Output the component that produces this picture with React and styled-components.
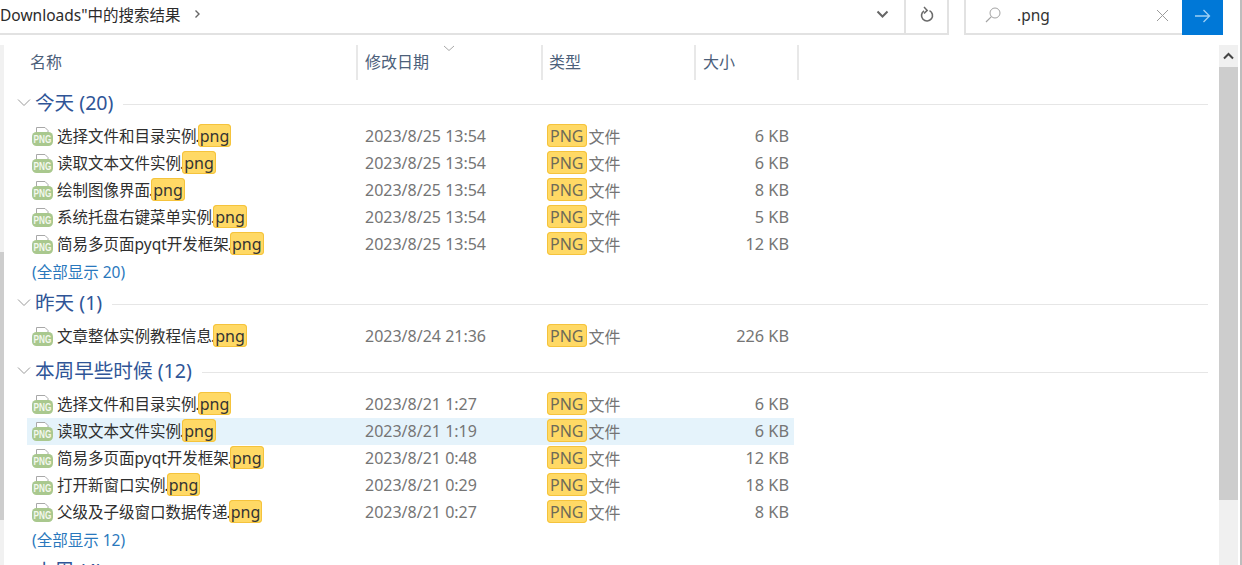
import React from "react";
import styled, { createGlobalStyle } from "styled-components";

const Global = createGlobalStyle`
  html, body { margin: 0; padding: 0; height: 565px; overflow: hidden; background: #fff; }
  body { font-family: "Noto Sans", "Noto Sans CJK SC", sans-serif; }
  * { box-sizing: border-box; }
`;

const Page = styled.div`
  width: 1242px; height: 565px; overflow: hidden; display: flex; flex-direction: column;
  border-right: 2px solid #bdbdbd; background: #fff;
`;
const TopBar = styled.div`display: flex; height: 35px; flex: none;`;
const AddressBox = styled.div`
  width: 949px; display: flex; align-items: center;
  border-bottom: 2px solid #e2e2e2; border-right: 2px solid #e2e2e2;
`;
const Crumb = styled.div`
  flex: 1; display: flex; align-items: center; gap: 10px; font-size: 15.5px; color: #2b2b2b; padding-bottom: 5px;
`;
const CrumbArrow = styled.svg`margin-left: 3px;`;
const BarButton = styled.div`
  width: ${p => p.$w}px; height: 100%; display: flex; align-items: center; justify-content: center; padding: 0 0 4px 0;
  border-right: ${p => (p.$divider ? "2px solid #e2e2e2" : "none")};
`;
const SearchBox = styled.div`
  margin-left: 15px; width: 218px; display: flex; align-items: center; padding: 0 13px 3px 19px;
  border-left: 2px solid #e2e2e2; border-bottom: 2px solid #e2e2e2;
`;
const SearchText = styled.span`flex: 1; margin-left: 16px; font-size: 15.5px; color: #333;`;
const GoButton = styled.div`
  width: 41px; height: 35px; padding-bottom: 4px; background: #0078d7; display: flex; align-items: center; justify-content: center;
`;
const Body = styled.div`flex: 1; display: flex; margin-top: 10px; min-height: 0; padding-right: 2px;`;
const LeftRail = styled.div`
  width: 4px; flex: none; display: flex; flex-direction: column; background: #f1f1f1;
`;
const LeftThumb = styled.div`height: 268px; margin-top: 207px; background: #cdcdcd;`;
const Content = styled.div`flex: 1; min-width: 0; overflow: hidden; padding-right: 11px;`;
const ScrollBar = styled.div`
  width: 19px; flex: none; background: #f0f0f0; display: flex; flex-direction: column;
`;
const ScrollArrow = styled.div`height: 22px; flex: none; display: flex; align-items: center; justify-content: center;`;
const ScrollThumb = styled.div`height: 433px; background: #cdcdcd;`;

const HeaderRow = styled.div`display: flex; height: 35px; padding-left: 22px;`;
const HeaderCell = styled.div`
  position: relative; width: ${p => p.$w}px; display: flex; align-items: center;
  padding: 0 0 3px ${p => p.$pad}px; font-size: 16px; color: #4c607a;
  border-right: 2px solid #e8e8e8;
`;
const SortMark = styled.svg`position: absolute; left: 85px; top: 0;`;

const Section = styled.section`padding-bottom: ${p => (p.$tail ? "6.5px" : "0")};`;
const GroupHeader = styled.div`
  height: 30px; display: flex; align-items: center; margin-top: ${p => p.$top ?? 3}px; padding-left: 13px;
  font-size: 19.6px; color: #2f5597;
`;
const GroupLabel = styled.span`margin: 0 0 3px 4px; white-space: nowrap;`;
const GroupLine = styled.div`flex: 1; height: 1px; background: #e6e6e6; margin: 2px 0 0 10px;`;
const GroupChevron = styled.svg`flex: none; margin-bottom: 1px;`;
const RowList = styled.div`padding-top: 4.5px;`;
const Row = styled.div`
  display: grid; grid-template-columns: 338px 182px 153px 89px; align-items: center;
  height: 27px; width: 767px; margin-left: 23px; font-size: 15.5px; padding-bottom: 1px;
  background: ${p => (p.$selected ? "#e5f3fb" : "transparent")};
`;
const NameCell = styled.div`display: flex; align-items: center; color: #2f2f2f; white-space: nowrap; padding-left: 4px;`;
const FileIcon = styled.svg`flex: none; margin-right: 4px; margin-top: 1px;`;
const Dot = styled.span`margin: 0 -2px 0 -1px;`;
const Mark = styled.span`
  display: inline-flex; align-items: center; height: 23px; padding: 0 ${p => (p.$muted ? 3 : 2)}px; border-radius: 4px;
  font-size: 16px; background: #ffd965; box-shadow: inset 0 0 0 1px #f5c33c;
  color: ${p => (p.$muted ? "#6d6a58" : "#333")};
`;
const MetaCell = styled.div`color: #757575; white-space: nowrap; font-size: 16px;`;
const TypeCell = styled.div`display: flex; align-items: center; gap: 2px; color: #757575; font-size: 16px;`;
const SizeCell = styled.div`color: #757575; text-align: right; white-space: nowrap; font-size: 16.3px;`;
const MoreLink = styled.div`
  height: 27px; margin: 0.5px 0 3px 28px; display: flex; align-items: center; font-size: 15.5px; color: #2a78bd;
`;

const PngIcon = () => (
  <FileIcon width="22" height="21" viewBox="0 0 22 21">
    <path d="M5.5 8V1.5h8.5l3 3V8" fill="#fff" stroke="#a8a8a8" strokeWidth="1" />
    <rect x="1" y="6" width="21" height="14" rx="4.5" fill="#a9c88e" />
    <text transform="translate(11.5 17) scale(1 1.3)" textAnchor="middle" fontSize="8.2"
      fontWeight="700" fill="#f4f8ee" fontFamily="Liberation Sans, sans-serif">PNG</text>
  </FileIcon>
);

const Chevron = () => (
  <GroupChevron width="14" height="9" viewBox="0 0 14 9"><path d="M1 1.5l6 6 6-6" fill="none" stroke="#9a9a9a" strokeWidth="1" /></GroupChevron>
);

const FileRow = ({ name, date, size, selected }) => (
  <Row $selected={selected}>
    <NameCell><PngIcon />{name}<Dot>.</Dot><Mark>png</Mark></NameCell>
    <MetaCell>{date}</MetaCell>
    <TypeCell><Mark $muted>PNG</Mark>文件</TypeCell>
    <SizeCell>{size}</SizeCell>
  </Row>
);

const groups = [
  { label: "今天 (20)", top: 8, more: "(全部显示 20)", rows: [
    ["选择文件和目录实例", "2023/8/25 13:54", "6 KB"],
    ["读取文本文件实例", "2023/8/25 13:54", "6 KB"],
    ["绘制图像界面", "2023/8/25 13:54", "8 KB"],
    ["系统托盘右键菜单实例", "2023/8/25 13:54", "5 KB"],
    ["简易多页面pyqt开发框架", "2023/8/25 13:54", "12 KB"],
  ]},
  { label: "昨天 (1)", rows: [["文章整体实例教程信息", "2023/8/24 21:36", "226 KB"]] },
  { label: "本周早些时候 (12)", top: 0, more: "(全部显示 12)", rows: [
    ["选择文件和目录实例", "2023/8/21 1:27", "6 KB"],
    ["读取文本文件实例", "2023/8/21 1:19", "6 KB", true],
    ["简易多页面pyqt开发框架", "2023/8/21 0:48", "12 KB"],
    ["打开新窗口实例", "2023/8/21 0:29", "18 KB"],
    ["父级及子级窗口数据传递", "2023/8/21 0:27", "8 KB"],
  ]},
  { label: "上周 (4)", rows: [] },
];

export default function App() {
  return (
    <Page>
      <Global />
      <TopBar>
        <AddressBox>
          <Crumb>
            <span>Downloads"中的搜索结果</span>
            <CrumbArrow width="7" height="10" viewBox="0 0 7 10"><path d="M1.5 1.5L5 5 1.5 8.5" fill="none" stroke="#666" strokeWidth="1.4" /></CrumbArrow>
          </Crumb>
          <BarButton $w={46} $divider>
            <svg width="13" height="9" viewBox="0 0 13 9"><path d="M1.5 1.5l5 5 5-5" fill="none" stroke="#666" strokeWidth="2" /></svg>
          </BarButton>
          <BarButton $w={41}>
            <svg width="16" height="18" viewBox="0 0 16 18">
              <path d="M10.5 4.6A5.5 5.5 0 1 1 5 4.9" fill="none" stroke="#6a6a6a" strokeWidth="1.6" />
              <path d="M5 1l3.2 3.4L5 7.5" fill="none" stroke="#6a6a6a" strokeWidth="1.5" />
            </svg>
          </BarButton>
        </AddressBox>
        <SearchBox>
          <svg width="16" height="16" viewBox="0 0 16 16">
            <circle cx="10" cy="6" r="5" fill="none" stroke="#a3a3a3" strokeWidth="1" />
            <path d="M6.4 9.6L1 15" stroke="#a3a3a3" strokeWidth="1.2" />
          </svg>
          <SearchText>.png</SearchText>
          <svg width="13" height="13" viewBox="0 0 13 13"><path d="M1 1l11 11M12 1L1 12" stroke="#9b9b9b" strokeWidth="1" /></svg>
        </SearchBox>
        <GoButton>
          <svg width="17" height="14" viewBox="0 0 17 14"><path d="M1 7h14M9.5 1l6 6-6 6" fill="none" stroke="#9fd0f5" strokeWidth="1.3" /></svg>
        </GoButton>
      </TopBar>
      <Body>
        <LeftRail><LeftThumb /></LeftRail>
        <Content>
          <HeaderRow>
            <HeaderCell $w={332} $pad={4}>名称</HeaderCell>
            <HeaderCell $w={185} $pad={7}>
              修改日期
              <SortMark width="12" height="7" viewBox="0 0 12 7"><path d="M1 1l5 4.5L11 1" fill="none" stroke="#a8a8a8" strokeWidth="1" /></SortMark>
            </HeaderCell>
            <HeaderCell $w={153} $pad={6}>类型</HeaderCell>
            <HeaderCell $w={103} $pad={7}>大小</HeaderCell>
          </HeaderRow>
          {groups.map(g => (
            <Section key={g.label} $tail={!g.more && g.rows.length > 0}>
              <GroupHeader $top={g.top}>
                <Chevron />
                <GroupLabel>{g.label}</GroupLabel>
                <GroupLine />
              </GroupHeader>
              {g.rows.length > 0 && (
                <RowList>
                  {g.rows.map(([name, date, size, sel], i) => (
                    <FileRow key={i} name={name} date={date} size={size} selected={sel} />
                  ))}
                </RowList>
              )}
              {g.more && <MoreLink>{g.more}</MoreLink>}
            </Section>
          ))}
        </Content>
        <ScrollBar>
          <ScrollArrow>
            <svg width="11" height="8" viewBox="0 0 11 8"><path d="M1 6.5l4.5-4.5L10 6.5" fill="none" stroke="#444" strokeWidth="2" /></svg>
          </ScrollArrow>
          <ScrollThumb />
        </ScrollBar>
      </Body>
    </Page>
  );
}
